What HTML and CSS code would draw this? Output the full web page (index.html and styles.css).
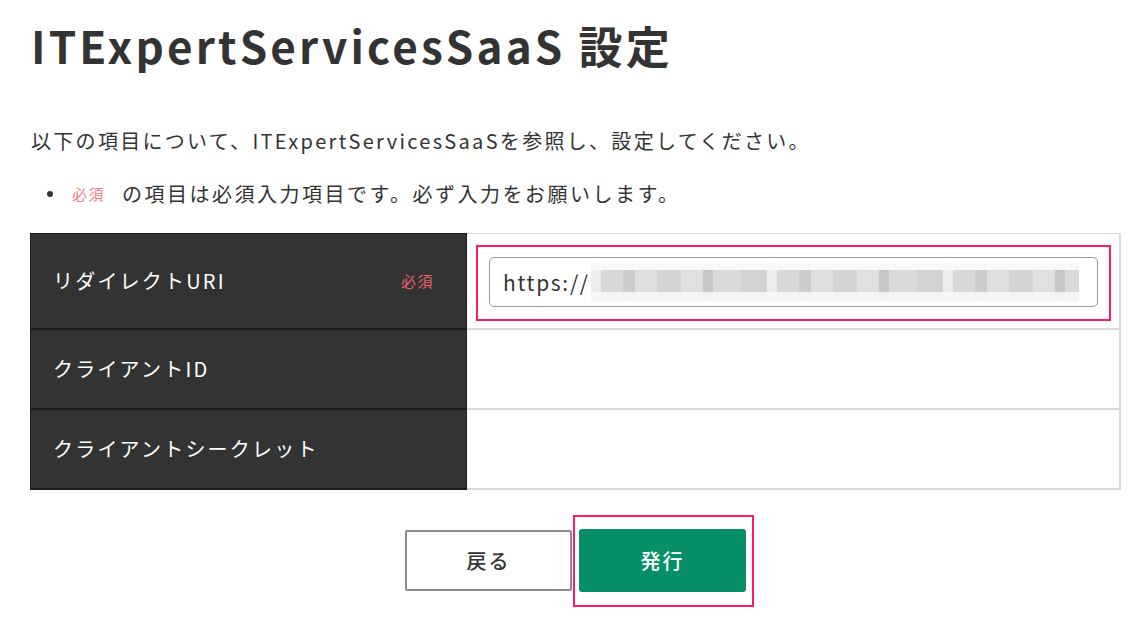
FILE: index.html
```html
<!DOCTYPE html>
<html lang="ja">
<head>
<meta charset="utf-8">
<title>ITExpertServicesSaaS 設定</title>
<link rel="stylesheet" href="styles.css">
</head>
<body>
<main class="page">
  <h1 class="title">ITExpertServicesSaaS 設定</h1>
  <p class="intro">以下の項目について、ITExpertServicesSaaSを参照し、設定してください。</p>
  <ul class="notes">
    <li class="note"><span class="req">必須</span>の項目は必須入力項目です。必ず入力をお願いします。</li>
  </ul>

  <div class="form-table">
    <div class="row row-first">
      <div class="th"><span class="label">リダイレクトURI</span><span class="req req-th">必須</span></div>
      <div class="td td-input">
        <div class="highlight">
          <div class="input"><span class="input-text">https://</span><span class="blur"></span></div>
        </div>
      </div>
    </div>
    <div class="row">
      <div class="th"><span class="label">クライアントID</span></div>
      <div class="td"></div>
    </div>
    <div class="row">
      <div class="th"><span class="label">クライアントシークレット</span></div>
      <div class="td"></div>
    </div>
  </div>

  <div class="actions">
    <button class="btn btn-back" type="button">戻る</button>
    <span class="btn-mark"><button class="btn btn-issue" type="button">発行</button></span>
  </div>
</main>
</body>
</html>
```

FILE: styles.css
```css
* { box-sizing: border-box; }

html, body {
  margin: 0;
  padding: 0;
  background: #ffffff;
}

body {
  font-family: "Noto Sans CJK JP", "Noto Sans", sans-serif;
  color: #333333;
  letter-spacing: 0.1em;
}

.page {
  width: 1120px;
  padding: 19px 0 43px 30px;
}

.title {
  margin: 0 0 0 1px;
  font-size: 44px;
  line-height: 1.2;
  font-weight: 700;
  letter-spacing: 0.072em;
}

.intro {
  margin: 54px 0 0 1px;
  font-size: 20px;
  line-height: 30px;
  letter-spacing: 0.115em;
}

.notes {
  list-style: none;
  margin: 23px 0 0 0;
  padding: 0;
}

.note {
  display: flex;
  align-items: center;
  padding-left: 17px;
  font-size: 20px;
  line-height: 30px;
  letter-spacing: 0.125em;
}

.note::before {
  content: "";
  width: 6px;
  height: 6px;
  border-radius: 50%;
  background: #333333;
  margin-right: 19px;
}

.req {
  color: #f06a72;
  font-size: 15px;
  letter-spacing: 0.1em;
}

.note .req {
  margin-right: 17px;
  color: #f57c83;
}

.form-table {
  margin-top: 24px;
  width: 1091px;
}

.row {
  display: flex;
}

.th {
  width: 437px;
  flex: none;
  display: flex;
  align-items: center;
  justify-content: space-between;
  background: #333333;
  color: #ffffff;
  border-left: 1px solid #1c1c1c;
  border-right: 1px solid #1c1c1c;
  border-bottom: 2px solid #1c1c1c;
  padding: 0 32px 0 22px;
  height: 80px;
  font-size: 20px;
  font-weight: 400;
  letter-spacing: 0.11em;
}

.row-first .th {
  height: 97px;
  border-top: 1px solid #1c1c1c;
}

.req-th {
  color: #e8636b;
  font-weight: 400;
}

.td {
  flex: 1;
  border-right: 2px solid #dadada;
  border-bottom: 2px solid #dadada;
  height: 80px;
}

.row-first .td {
  height: 97px;
  border-top: 1px solid #dadada;
}

.td-input {
  padding: 11px 8px 0 9px;
}

.highlight {
  border: 2px solid #ff1a62;
  padding: 10px 11px 12px 11px;
}

.input {
  height: 50px;
  border: 1px solid #9a9a9a;
  border-radius: 5px;
  display: flex;
  align-items: center;
  padding-left: 13px;
  font-size: 21px;
  letter-spacing: 0.08em;
  color: #333333;
}

.input-text {
  margin-right: 1px;
}

.blur {
  width: 488px;
  height: 38px;
  background:
    linear-gradient(to bottom, rgba(250,250,250,0.95) 0 7px, rgba(255,255,255,0) 7px 29px, rgba(248,248,248,0.9) 29px),
    repeating-linear-gradient(90deg,
      #ececec 0 10px,
      #d8d8d8 10px 32px,
      #cccccc 32px 44px,
      #dedede 44px 66px,
      #d4d4d4 66px 90px,
      #e0e0e0 90px 112px,
      #c8c8c8 112px 122px,
      #dadada 122px 150px,
      #d2d2d2 150px 176px);
}

.actions {
  display: flex;
  justify-content: center;
  align-items: center;
  gap: 7px;
  width: 1091px;
  margin-top: 39px;
}

.btn {
  width: 167px;
  font-family: "Noto Sans CJK JP", sans-serif;
  font-size: 20px;
  font-weight: 500;
  letter-spacing: 0.1em;
  cursor: pointer;
}

.btn-back {
  height: 61px;
  background: #ffffff;
  color: #333333;
  border: 2px solid #8c8c8c;
  border-radius: 2px;
}

.btn-mark {
  position: relative;
  display: block;
}

.btn-issue {
  display: block;
  height: 63px;
  background: #078f6a;
  color: #ffffff;
  border: none;
  border-radius: 3px;
}

.btn-mark::after {
  content: "";
  position: absolute;
  left: -6px;
  right: -8px;
  top: -14px;
  bottom: -15px;
  border: 2px solid #ff1a62;
  pointer-events: none;
}
```
